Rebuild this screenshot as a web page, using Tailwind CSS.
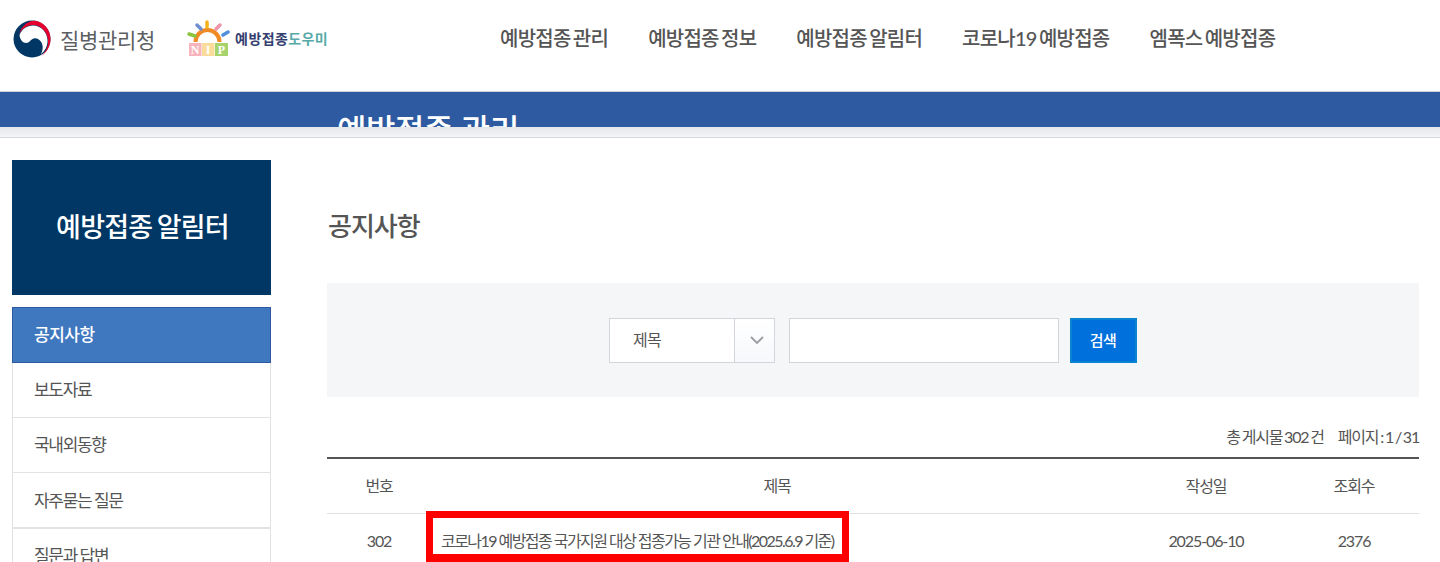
<!DOCTYPE html>
<html lang="ko">
<head>
    <meta charset="UTF-8">
    <title>공지사항</title>
    <script src="https://cdn.jsdelivr.net/npm/@tailwindcss/browser@4"></script>
</head>
<body class="h-[562px] overflow-hidden bg-white font-['Lato','Noto_Sans_CJK_KR',sans-serif] text-[#555]">
    <!-- Top header -->
    <header class="flex h-[92px] border-b border-[#ccd0d6]">
        <div class="flex h-[78px] w-[500px] shrink-0 items-center pl-[13px]">
            <svg width="38" height="38" viewBox="0 0 38 38" class="shrink-0">
                <circle cx="19" cy="19" r="18.500" fill="#003764"/>
                <path d="M6 14 C9 5 16 0.500 22 0.800 C31 2 37.500 10 37.500 19 C37.500 27 33 33 28 36 C33 32 35.500 26 35 20 C34 11 27 5 20 5 C14 5 9 9 6 14Z" fill="#e6002d"/>
                <path d="M6.500 15 C9 9 14 5.500 20 5.500 C28 5.500 34 12 34.500 20 C34.800 26 32 31 28 34 C31 28 30 22 25 19 C21 17 18 20 16 22 C12 25 7 21 6.500 15Z" fill="#fff"/>
            </svg>
            <span class="ml-[9px] text-[21px] leading-none tracking-[-0.3px] text-[#5c5f63]">질병관리청</span>
            <svg width="44" height="38" viewBox="0 0 44 38" class="ml-[31px] shrink-0">
                <path d="M9.500 22 A12 12 0 0 1 33.500 22" fill="none" stroke="#f08a24" stroke-width="4"/>
                <path d="M21 2 V7" stroke="#f6b21c" stroke-width="3.500" stroke-linecap="round"/>
                <path d="M11 5 L15 9" stroke="#6f8fd0" stroke-width="3.500" stroke-linecap="round"/>
                <path d="M34 5 L30 9" stroke="#ef93a6" stroke-width="3.500" stroke-linecap="round"/>
                <path d="M3 14 L9 16" stroke="#8cc63f" stroke-width="3.500" stroke-linecap="round"/>
                <path d="M42 12 L37 15" stroke="#4f8fdc" stroke-width="3.500" stroke-linecap="round"/>
                <rect x="3" y="23" width="12.500" height="13" fill="#f7b4bd"/>
                <rect x="16" y="23" width="12.500" height="13" fill="#f9dc9a"/>
                <rect x="29" y="23" width="13" height="13" fill="#a6d36c"/>
                <text x="9" y="34" text-anchor="middle" font-family="Liberation Serif" font-size="12" font-weight="700" fill="#fff">N</text>
                <text x="22" y="34" text-anchor="middle" font-family="Liberation Serif" font-size="12" font-weight="700" fill="#fff">I</text>
                <text x="35.500" y="34" text-anchor="middle" font-family="Liberation Serif" font-size="12" font-weight="700" fill="#fff">P</text>
            </svg>
            <span class="ml-[5px] text-[14px] font-bold leading-none tracking-[0.4px] text-[#34406f]">예방접종<span class="text-[#55aaa8]">도우미</span></span>
        </div>
        <nav class="flex h-[76px] items-center gap-[40px] text-[20px] font-medium tracking-[-0.76px] [word-spacing:-2px] text-[#555]">
            <a>예방접종 관리</a>
            <a>예방접종 정보</a>
            <a>예방접종 알림터</a>
            <a>코로나19 예방접종</a>
            <a>엠폭스 예방접종</a>
        </nav>
    </header>

    <!-- Blue title band, the heading is cut off by the band -->
    <div class="h-[35px] overflow-hidden bg-[#2d5aa0] pl-[337px] pt-[18px] text-[32px] font-medium leading-[40px] tracking-[-0.4px] text-white">예방접종 관리</div>
    <div class="h-[11px] border-b border-[#d5d8dc] bg-gradient-to-b from-[#e4e7ea] to-[#f3f4f6]"></div>

    <div class="flex items-start pl-[12px] pr-[21px] pt-[22px]">
        <!-- Left menu -->
        <aside class="w-[259px] shrink-0">
            <div class="flex h-[135px] items-center justify-center bg-[#003764] pl-[2px] text-[27px] font-medium tracking-[-0.8px] [word-spacing:-1.5px] text-white">예방접종 알림터</div>
            <ul class="mt-[12px] text-[17px] tracking-[-1.3px] [word-spacing:-0.5px] text-[#555]">
                <li class="flex h-[56px] items-center border border-[#2d5aa0] bg-[#4078c0] pl-[21px] font-medium tracking-[-0.5px] text-white">공지사항</li>
                <li class="flex h-[55px] items-center border-x border-b border-[#e2e2e2] pl-[21px]">보도자료</li>
                <li class="flex h-[55px] items-center border-x border-b border-[#e2e2e2] pl-[21px]">국내외동향</li>
                <li class="flex h-[56px] items-center border-x border-b-2 border-[#e2e2e2] pl-[21px] pt-[1px]">자주묻는 질문</li>
                <li class="flex h-[55px] items-center border-x border-b border-[#e2e2e2] pl-[21px]">질문과 답변</li>
            </ul>
        </aside>

        <!-- Content -->
        <main class="ml-[56px] min-w-0 flex-1">
            <h2 class="mt-[44px] h-[44px] pl-px text-[26px] font-medium leading-[44px] tracking-[-1px] text-[#555]">공지사항</h2>

            <form class="mt-[35px] flex h-[114px] items-center justify-center bg-[#f5f6f8]">
                <div class="flex h-[45px] w-[166px] border border-[#d2d5dc] bg-white text-[16px] tracking-[-0.8px]">
                    <span class="flex flex-1 items-center border-r border-[#d2d5dc] pl-[23px]">제목</span>
                    <span class="flex w-[39px] items-center justify-center bg-gradient-to-b from-white to-[#f6f8fb] pl-[4px]">
                        <svg width="14" height="8" viewBox="0 0 14 8"><path d="M1 1 L7 7 L13 1" fill="none" stroke="#9a9da2" stroke-width="1.800"/></svg>
                    </span>
                </div>
                <div class="ml-[14px] h-[45px] w-[270px] border border-[#d2d5dc] bg-white"></div>
                <button type="button" class="ml-[11px] h-[45px] w-[67px] border-2 border-[#0a84d0] bg-[#0070dc] pr-[1px] text-[15px] font-medium tracking-[-0.5px] text-white">검색</button>
            </form>

            <div class="mt-[29px] h-[31px] text-right text-[16px] leading-[22px] tracking-[-1.2px] [word-spacing:-1px] text-[#555]">
                <span>총 게시물 302 건</span><span class="ml-[14px]">페이지 : 1 / 31</span>
            </div>

            <table class="w-full table-fixed border-t-2 border-[#555] text-center text-[16px] tracking-[-1.1px]">
                <colgroup>
                    <col class="w-[104px]">
                    <col>
                    <col class="w-[166px]">
                    <col class="w-[130px]">
                </colgroup>
                <thead>
                    <tr class="h-[55px] border-b border-[#e0e0e0]">
                        <th class="font-normal">번호</th>
                        <th class="font-normal">제목</th>
                        <th class="font-normal">작성일</th>
                        <th class="font-normal">조회수</th>
                    </tr>
                </thead>
                <tbody>
                    <tr class="h-[55px]">
                        <td>302</td>
                        <td class="pl-[10px] text-left tracking-[-1.55px]">코로나19 예방접종 국가지원 대상 접종가능 기관 안내(2025.6.9 기준)</td>
                        <td>2025-06-10</td>
                        <td>2376</td>
                    </tr>
                </tbody>
            </table>
        </main>
    </div>

    <!-- Red highlight drawn over the first row -->
    <div class="absolute left-[426px] top-[511px] h-[51px] w-[423px] border-[7px] border-b-[8px] border-[#ff0000]"></div>
</body>
</html>
